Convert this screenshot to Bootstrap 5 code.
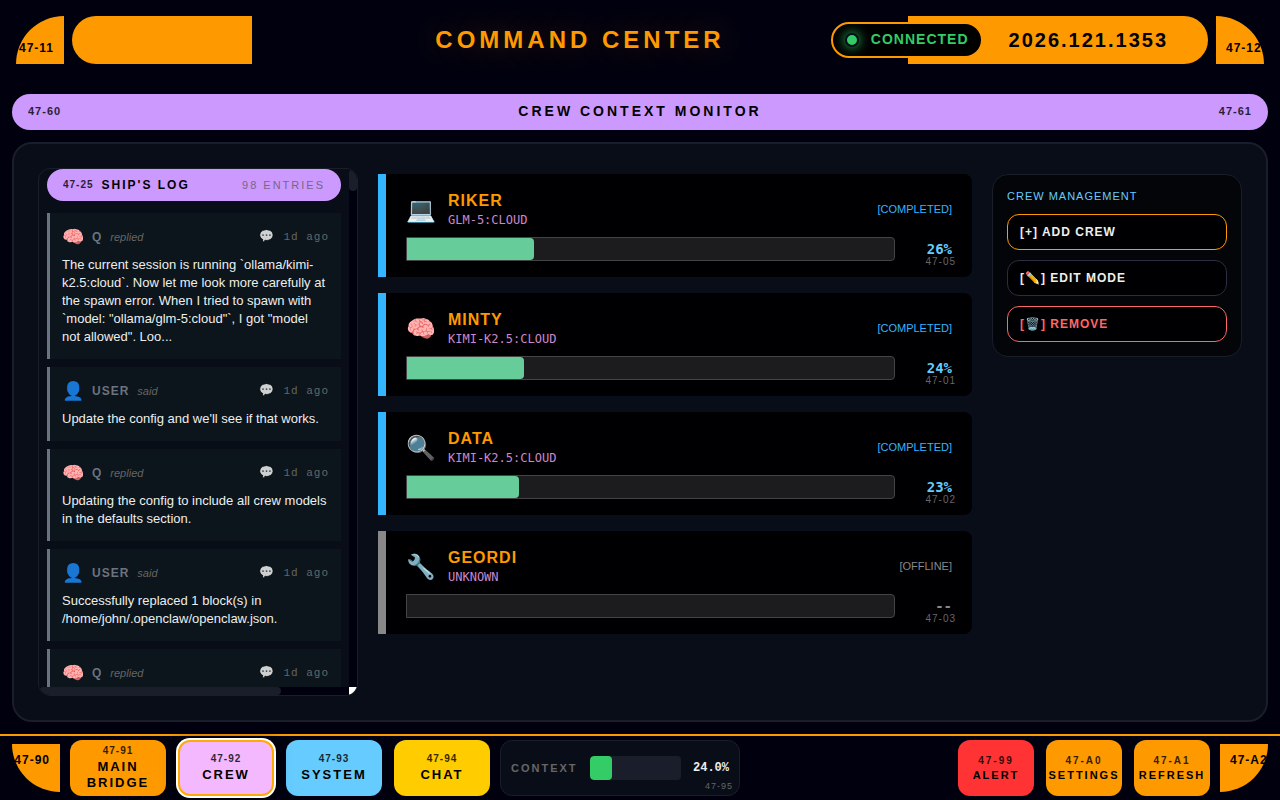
<!DOCTYPE html>
<html lang="en" data-bs-theme="dark">
<head>
<meta charset="utf-8">
<meta name="viewport" content="width=device-width, initial-scale=1">
<title>Command Center</title>
<link href="https://cdn.jsdelivr.net/npm/bootstrap@5.3.0/dist/css/bootstrap.min.css" rel="stylesheet">
<style>
  :root { --orange:#ff9900; --violet:#cc99ff; --sky:#66ccff; --panel:#090d18; --line:#1a1e2a; --void:#00000f; }
  body { font-family:"Liberation Sans",Arial,sans-serif; background:var(--void); color:#eee; font-size:13px; line-height:18px; }
  .mono { font-family:"DejaVu Sans Mono",monospace; }
  .ls-1 { letter-spacing:1px; } .ls-2 { letter-spacing:2px; } .ls-3 { letter-spacing:3px; } .ls-4 { letter-spacing:4px; }
  .fs-9 { font-size:9px; } .fs-10 { font-size:10px; } .fs-11 { font-size:11px; } .fs-12 { font-size:12px; } .fs-14 { font-size:14px; }
  .dim { opacity:.8; }

  /* frame corners */
  .elbow { width:48px; height:48px; padding:8px 10px; background:var(--orange); color:#000; font-size:12px; font-weight:700; letter-spacing:1px; line-height:16px; flex:none; white-space:nowrap; }
  .elbow.tl { border-top-left-radius:48px; } .elbow.tr { border-top-right-radius:48px; }
  .elbow.bl { border-bottom-left-radius:48px; } .elbow.br { border-bottom-right-radius:48px; }

  .top { height:80px; gap:8px; }
  .cap-left { width:180px; height:48px; background:var(--orange); border-radius:24px 0 0 24px; flex:none; }
  .cap-right { width:300px; height:48px; background:var(--orange); border-radius:0 24px 24px 0; flex:none; gap:26px; padding-right:40px; margin-left:-8px; color:#000; }
  .title { font-size:24px; line-height:32px; color:var(--orange); text-shadow:0 0 30px rgba(255,153,0,.3); margin-left:-8px; }
  .stardate { font-size:20px; }
  .conn { height:36px; padding:0 12px 2px; gap:12px; background:#000; border:2px solid var(--orange); border-radius:18px; color:#33cc66; flex:none; }
  .conn-dot { width:14px; height:14px; margin-top:2px; border-radius:50%; background:#33cc66; border:2px solid #001018; box-shadow:0 0 12px #33cc66; }

  .banner { height:36px; border-radius:18px; background:var(--violet); color:#000; padding:0 16px 2px; margin:14px 12px 12px; flex:none; }
  .main-panel { margin:0 12px 12px; padding:24px; border:2px solid var(--line); border-radius:20px; background:var(--panel); min-height:0; }
  .deck { display:grid; grid-template-columns:320px minmax(0,1fr) 250px; grid-template-rows:minmax(0,1fr); gap:20px; height:100%; }

  /* ship's log, with its own scroll tracks */
  .log { display:grid; grid-template:minmax(0,1fr) 8px / minmax(0,1fr) 8px; border:1px solid var(--line); border-radius:12px; overflow:hidden; }
  .log-body { overflow-y:auto; padding:0 8px; scrollbar-width:none; }
  .log-body::-webkit-scrollbar { display:none; }
  .track { background:var(--void); }
  .thumb { background:var(--line); border-radius:4px; }
  .track-y .thumb { height:22px; }
  .track-x .thumb { height:8px; width:78%; }
  .track-corner { background:#fff; }
  .log-head { height:32px; border-radius:16px; background:var(--violet); color:#000; padding:0 16px; margin-bottom:12px; }
  .log-count { color:#766688; }
  .entry { border-left:3px solid #6b7280; background:#0b151b; padding:12px 12px 13px; margin-bottom:8px; }
  .entry-top { height:24px; gap:8px; margin-bottom:7px; color:#6b7280; }
  .entry-top .face { font-size:18px; line-height:24px; }
  .who { letter-spacing:1px; font-size:12px; }
  .verb { color:#666; }
  .stamp { font-family:"Liberation Mono",monospace; color:#666; gap:8px; }
  .stamp span { opacity:.8; font-size:12px; }

  /* crew cards */
  .crew-list { padding-top:6px; gap:16px; }
  .crew { border-left:8px solid #33b5ff; border-radius:0 8px 8px 0; background:#000002; padding:16px 20px; }
  .crew.off { border-left-color:#888; }
  .crew .face { font-size:24px; line-height:39px; }
  .crew-name { font-size:16px; line-height:21px; color:var(--orange); }
  .crew-model { color:#cc88cc; }
  .crew-state { color:#33b5ff; padding-bottom:2px; }
  .off .crew-state, .off .crew-pct { color:#888; }
  .crew-pct { width:57px; color:var(--sky); }
  .crew-code { right:16px; bottom:6px; color:#666; }
  .crew .progress { height:24px; background:#1c1c1e; border:1px solid #444; border-radius:0 4px 4px 0; }
  .crew .progress-bar { background:#66cc99; border-radius:0 4px 4px 0; }

  .manage { margin-top:6px; padding:14px; gap:10px; border:1px solid var(--line); border-radius:16px; background:#040509; }
  .manage h2 { font-size:11px; line-height:15px; color:var(--sky); font-weight:400; }
  .act { height:36px; border:1px solid #2a2e40; border-radius:12px; background:#000002; color:#eee; padding:0 12px; font-size:12px; font-weight:700; letter-spacing:1px; text-align:left; }
  .act.add { border-color:var(--orange); } .act.del { border-color:#ff6666; color:#ff6666; }

  /* bottom bar */
  .bottom { height:66px; border-top:2px solid var(--orange); padding:0 12px; gap:10px; flex:none; }
  .nav-btn { width:96px; height:56px; border:0; border-radius:12px; padding:0 0 2px; color:#000; font-size:13px; font-weight:700; letter-spacing:2px; line-height:16px; background:var(--c); }
  .nav-btn small { display:block; font-size:10px; letter-spacing:1px; line-height:16px; }
  .nav-btn.current { border:2px solid #ffaa00; box-shadow:0 0 0 2px #fff, 0 0 16px rgba(0,0,0,.5); position:relative; }
  .sys-btn { width:76px; padding:0; font-size:11px; line-height:14px; }
  .sys-btn small { letter-spacing:2px; line-height:14px; }
  .context { width:240px; height:56px; padding:0 10px; gap:12px; border:1px solid var(--line); border-radius:12px; background:var(--panel); }
  .context .progress { height:24px; background:var(--line); border-radius:4px; }
  .context .progress-bar { background:#33cc66; border-radius:4px; }
  .context label { color:#666; }
  .context output { font-family:"Liberation Mono",monospace; }
  .context-code { right:6px; bottom:0; color:#666; }
</style>
</head>
<body class="vh-100 d-flex flex-column overflow-hidden">

<header class="top d-flex align-items-center px-3 flex-shrink-0">
  <div class="elbow tl d-flex align-items-end justify-content-end">47-11</div>
  <div class="cap-left"></div>
  <h1 class="title fw-bold ls-4 flex-grow-1 text-center mb-0">COMMAND CENTER</h1>
  <div class="cap-right d-flex align-items-center justify-content-end">
    <div class="conn d-flex align-items-center fw-bold fs-14 ls-1"><span class="conn-dot"></span>CONNECTED</div>
    <div class="stardate fw-bold ls-2">2026.121.1353</div>
  </div>
  <div class="elbow tr d-flex align-items-end">47-12</div>
</header>

<div class="banner d-flex align-items-center justify-content-between fw-bold">
  <span class="fs-11 ls-1 dim">47-60</span>
  <span class="fs-14 ls-3">CREW CONTEXT MONITOR</span>
  <span class="fs-11 ls-1 dim">47-61</span>
</div>

<main class="main-panel flex-grow-1">
  <div class="deck">
    <section class="log">
      <div class="log-body">
        <div class="log-head d-flex align-items-center">
          <span class="fs-10 fw-bold ls-1 dim me-2">47-25</span>
          <span class="fs-12 fw-bold ls-2">SHIP'S LOG</span>
          <span class="log-count fs-11 ls-2 ms-auto">98 ENTRIES</span>
        </div>
        <article class="entry">
          <div class="entry-top d-flex align-items-center"><span class="face">🧠</span><b class="who">Q</b><i class="verb fs-11">replied</i>
            <div class="stamp d-flex align-items-center fs-11 ls-1 ms-auto"><span>💬</span>1d ago</div></div>
          The current session is running `ollama/kimi-k2.5:cloud`. Now let me look more carefully at the spawn error. When I tried to spawn with `model: "ollama/glm-5:cloud"`, I got "model not allowed". Loo...
        </article>
        <article class="entry">
          <div class="entry-top d-flex align-items-center"><span class="face">👤</span><b class="who">USER</b><i class="verb fs-11">said</i>
            <div class="stamp d-flex align-items-center fs-11 ls-1 ms-auto"><span>💬</span>1d ago</div></div>
          Update the config and we'll see if that works.
        </article>
        <article class="entry">
          <div class="entry-top d-flex align-items-center"><span class="face">🧠</span><b class="who">Q</b><i class="verb fs-11">replied</i>
            <div class="stamp d-flex align-items-center fs-11 ls-1 ms-auto"><span>💬</span>1d ago</div></div>
          Updating the config to include all crew models in the defaults section.
        </article>
        <article class="entry">
          <div class="entry-top d-flex align-items-center"><span class="face">👤</span><b class="who">USER</b><i class="verb fs-11">said</i>
            <div class="stamp d-flex align-items-center fs-11 ls-1 ms-auto"><span>💬</span>1d ago</div></div>
          Successfully replaced 1 block(s) in /home/john/.openclaw/openclaw.json.
        </article>
        <article class="entry">
          <div class="entry-top d-flex align-items-center"><span class="face">🧠</span><b class="who">Q</b><i class="verb fs-11">replied</i>
            <div class="stamp d-flex align-items-center fs-11 ls-1 ms-auto"><span>💬</span>1d ago</div></div>
        </article>
      </div>
      <div class="track track-y"><div class="thumb"></div></div>
      <div class="track track-x"><div class="thumb"></div></div>
      <div class="track-corner"></div>
    </section>

    <section class="crew-list d-flex flex-column">
      <article class="crew position-relative">
        <div class="d-flex align-items-center mb-2">
          <span class="face me-2 pe-1">💻</span>
          <div><div class="crew-name fw-bold ls-1">RIKER</div><div class="crew-model mono fs-12">GLM-5:CLOUD</div></div>
          <span class="crew-state fs-11 ms-auto">[COMPLETED]</span>
        </div>
        <div class="d-flex align-items-center">
          <div class="progress flex-grow-1"><div class="progress-bar" style="width:26%"></div></div>
          <div class="crew-pct mono fs-14 fw-bold text-end">26%</div>
        </div>
        <span class="crew-code position-absolute fs-10 ls-1">47-05</span>
      </article>
      <article class="crew position-relative">
        <div class="d-flex align-items-center mb-2">
          <span class="face me-2 pe-1">🧠</span>
          <div><div class="crew-name fw-bold ls-1">MINTY</div><div class="crew-model mono fs-12">KIMI-K2.5:CLOUD</div></div>
          <span class="crew-state fs-11 ms-auto">[COMPLETED]</span>
        </div>
        <div class="d-flex align-items-center">
          <div class="progress flex-grow-1"><div class="progress-bar" style="width:24%"></div></div>
          <div class="crew-pct mono fs-14 fw-bold text-end">24%</div>
        </div>
        <span class="crew-code position-absolute fs-10 ls-1">47-01</span>
      </article>
      <article class="crew position-relative">
        <div class="d-flex align-items-center mb-2">
          <span class="face me-2 pe-1">🔍</span>
          <div><div class="crew-name fw-bold ls-1">DATA</div><div class="crew-model mono fs-12">KIMI-K2.5:CLOUD</div></div>
          <span class="crew-state fs-11 ms-auto">[COMPLETED]</span>
        </div>
        <div class="d-flex align-items-center">
          <div class="progress flex-grow-1"><div class="progress-bar" style="width:23%"></div></div>
          <div class="crew-pct mono fs-14 fw-bold text-end">23%</div>
        </div>
        <span class="crew-code position-absolute fs-10 ls-1">47-02</span>
      </article>
      <article class="crew off position-relative">
        <div class="d-flex align-items-center mb-2">
          <span class="face me-2 pe-1">🔧</span>
          <div><div class="crew-name fw-bold ls-1">GEORDI</div><div class="crew-model mono fs-12">UNKNOWN</div></div>
          <span class="crew-state fs-11 ms-auto">[OFFLINE]</span>
        </div>
        <div class="d-flex align-items-center">
          <div class="progress flex-grow-1"><div class="progress-bar" style="width:0%"></div></div>
          <div class="crew-pct mono fs-14 fw-bold text-end">--</div>
        </div>
        <span class="crew-code position-absolute fs-10 ls-1">47-03</span>
      </article>
    </section>

    <aside>
      <div class="manage d-flex flex-column">
        <h2 class="ls-1 mb-0">CREW MANAGEMENT</h2>
        <button type="button" class="act add">[+] ADD CREW</button>
        <button type="button" class="act">[✏️] EDIT MODE</button>
        <button type="button" class="act del">[🗑️] REMOVE</button>
      </div>
    </aside>
  </div>
</main>

<footer class="bottom d-flex align-items-center">
  <div class="elbow bl d-flex align-items-start justify-content-end">47-90</div>
  <nav class="d-flex" style="gap:12px">
    <button type="button" class="nav-btn" style="--c:#ff9900"><small class="dim">47-91</small>MAIN BRIDGE</button>
    <button type="button" class="nav-btn current" style="--c:#f4b8ff" aria-current="page"><small class="dim">47-92</small>CREW</button>
    <button type="button" class="nav-btn" style="--c:#66ccff"><small class="dim">47-93</small>SYSTEM</button>
    <button type="button" class="nav-btn" style="--c:#ffcc00"><small class="dim">47-94</small>CHAT</button>
  </nav>
  <div class="context d-flex align-items-center position-relative">
    <label for="ctx" class="fs-11 fw-bold ls-2">CONTEXT</label>
    <div class="progress flex-grow-1"><div class="progress-bar" style="width:24%"></div></div>
    <output id="ctx" class="fs-12 fw-bold">24.0%</output>
    <span class="context-code position-absolute fs-9 ls-1">47-95</span>
  </div>
  <div class="d-flex ms-auto" style="gap:12px">
    <button type="button" class="nav-btn sys-btn" style="--c:#ff3333"><small class="dim">47-99</small>ALERT</button>
    <button type="button" class="nav-btn sys-btn" style="--c:#ff9900"><small class="dim">47-A0</small>SETTINGS</button>
    <button type="button" class="nav-btn sys-btn" style="--c:#ff9900"><small class="dim">47-A1</small>REFRESH</button>
  </div>
  <div class="elbow br d-flex align-items-start">47-A2</div>
</footer>

<script src="https://cdn.jsdelivr.net/npm/bootstrap@5.3.0/dist/js/bootstrap.bundle.min.js"></script>
</body>
</html>
